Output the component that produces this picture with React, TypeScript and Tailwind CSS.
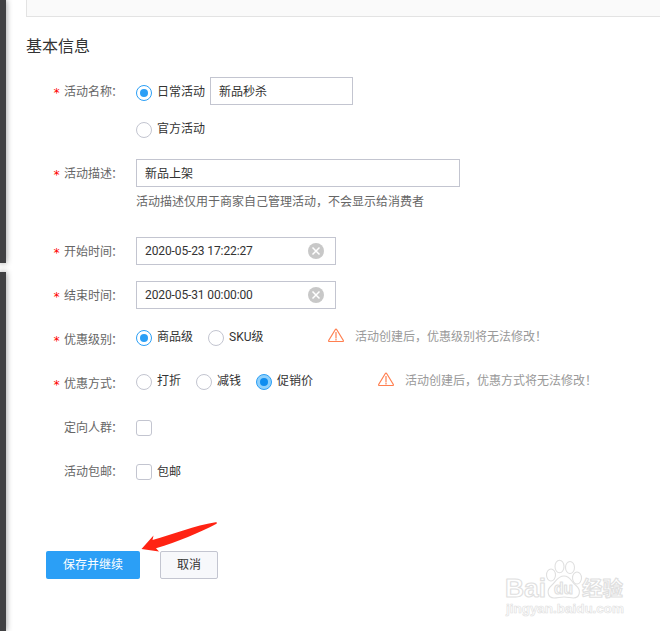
import type { ReactNode } from "react";

function Radio({ state = "off" }: { state?: "off" | "on" | "focus" }) {
  if (state === "off") {
    return <span className="size-4 shrink-0 rounded-full border border-[#c3c5d0] bg-white" />;
  }
  return (
    <span
      className={
        state === "on"
          ? "flex size-4 shrink-0 items-center justify-center rounded-full border border-[#2b9ff6] bg-white"
          : "flex size-4 shrink-0 items-center justify-center rounded-full border border-[#2b9ff6] bg-[#8fd0fb]"
      }
    >
      <span className={state === "on" ? "size-2 rounded-full bg-[#2b9ff6]" : "size-2 rounded-full bg-[#0f8df0]"} />
    </span>
  );
}

function Option({ children, state }: { children: string; state?: "off" | "on" | "focus" }) {
  return (
    <label className="flex h-4 items-start text-[#333]">
      <Radio state={state} />
      <span className="ml-[5px] -mt-px leading-4">{children}</span>
    </label>
  );
}

function Row({ label, required = true, className, children }: { label: string; required?: boolean; className: string; children: ReactNode }) {
  return (
    <div className={`flex items-start ${className}`}>
      <div className="flex w-[110px] shrink-0 pl-[27px] leading-4 text-[#666]">
        <span className="w-[11px] pt-[2px] font-['DejaVu_Sans_Mono'] text-[12px] leading-4 text-[#f00]">{required ? "*" : ""}</span>
        <span className="pt-px">
          {label}
          <span className="-ml-px">：</span>
        </span>
      </div>
      {children}
    </div>
  );
}

function DateField({ value }: { value: string }) {
  return (
    <div className="-mt-[6px] flex h-7 w-[200px] items-center justify-between border border-[#c3c5d0] bg-white pr-[11px] pl-2 text-[#333]">
      <span className="tracking-[-0.11px]">{value}</span>
      <svg className="size-4" viewBox="0 0 16 16">
        <circle cx="8" cy="8" r="8" fill="#c8c8c8" />
        <path d="M4.5 4.5l7 7M11.5 4.5l-7 7" stroke="#fff" strokeWidth="1.5" />
      </svg>
    </div>
  );
}

function Warning({ children }: { children: string }) {
  return (
    <div className="-mt-[2px] flex h-4 items-start leading-4 text-[#999]">
      <svg className="size-4" viewBox="0 0 16 16" fill="none" stroke="#ff7f50" strokeWidth="1.2">
        <path d="M7.2 1.8Q8 .5 8.8 1.8L15.2 12.2Q15.8 13.500 14.500 13.500H1.500Q.2 13.500.8 12.200Z" />
        <path d="M8 4v6.500M8 11v1.500" />
      </svg>
      <span className="ml-[11px] pt-px">{children}</span>
    </div>
  );
}

function Watermark() {
  return (
    <svg
      className="absolute top-[555px] left-[500px] h-[68px] w-[130px]"
      viewBox="0 0 130 68"
      fill="#fff"
      stroke="#e0e0e0"
      strokeWidth="1.1"
      strokeLinejoin="round"
    >
      <g fontWeight="700">
        <text x="5" y="41.5" fontSize="26" fontFamily="'Liberation Sans',sans-serif" textLength="41" lengthAdjust="spacingAndGlyphs">Bai</text>
        <text x="82" y="40.5" fontSize="20" fontFamily="'Noto Sans CJK SC',sans-serif" textLength="41" lengthAdjust="spacingAndGlyphs">经验</text>
        <text x="6" y="57.5" fontSize="12.500" strokeWidth="0.6" fontFamily="'Liberation Sans',sans-serif" textLength="118" lengthAdjust="spacingAndGlyphs">jingyan.baidu.com</text>
      </g>
      <ellipse cx="51" cy="20" rx="4.5" ry="6" />
      <ellipse cx="59.5" cy="11.5" rx="4.5" ry="6.3" />
      <ellipse cx="70" cy="12.5" rx="4.5" ry="6" />
      <ellipse cx="81" cy="23" rx="4.5" ry="6" transform="translate(-4 0)" />
      <path d="M64 21C57 21 56 27 51.500 30.500C46 35 47.500 43 54 43C58 43 60 42 64 42C68 42 70 43 73.500 43C80 43 81.500 35 76 30.500C71 27 71 21 64 21Z" />
      <text x="54" y="38.5" fontSize="16" fontWeight="700" fontFamily="'Liberation Sans',sans-serif" textLength="19" lengthAdjust="spacingAndGlyphs">du</text>
    </svg>
  );
}

export default function App() {
  return (
    <div className="relative flex h-[631px] w-[660px] overflow-hidden bg-white font-[Roboto,'Noto_Sans_CJK_SC',sans-serif] text-[12px] leading-4">
      <aside className="flex w-[6px] shrink-0 flex-col gap-[9px]">
        <div className="h-[263px] shrink-0 bg-[#414143] shadow-[0_0_6px_rgba(0,0,0,0.45)]" />
        <div className="flex-1 bg-[#414143] shadow-[0_0_6px_rgba(0,0,0,0.45)]" />
      </aside>

      <main className="flex flex-1 flex-col pl-5">
        <div className="h-[17px] shrink-0 border-b border-l border-[#e3e3e3] bg-[#fafafa]" />
        <h1 className="mt-5 h-5 text-[16px] leading-5 text-[#333]">基本信息</h1>

        <Row label="活动名称" className="mt-[26px] h-[37px]">
          <div className="mt-[2px] flex w-[74px]">
            <Option state="on">日常活动</Option>
          </div>
          <div className="-mt-[6px] flex h-7 w-[143px] items-center border border-[#c3c5d0] pt-[2px] pl-2 text-[#333]">新品秒杀</div>
        </Row>
        <div className="mt-[2px] flex h-[43px] items-start pl-[110px]">
          <Option>官方活动</Option>
        </div>

        <Row label="活动描述" className="h-[78px]">
          <div className="flex flex-col">
            <div className="-mt-[6px] flex h-7 w-[324px] items-center border border-[#c3c5d0] pt-[2px] pl-2 text-[#333]">新品上架</div>
            <p className="mt-[7px] leading-4 text-[#666]">活动描述仅用于商家自己管理活动，不会显示给消费者</p>
          </div>
        </Row>
        <Row label="开始时间" className="h-[44px]">
          <DateField value="2020-05-23 17:22:27" />
        </Row>
        <Row label="结束时间" className="h-[44px]">
          <DateField value="2020-05-31 00:00:00" />
        </Row>
        <Row label="优惠级别" className="h-[44px]">
          <div className="-mt-px flex">
            <div className="flex w-[72px]"><Option state="on">商品级</Option></div>
            <div className="flex w-[120px]"><Option>SKU级</Option></div>
            <Warning>活动创建后，优惠级别将无法修改！</Warning>
          </div>
        </Row>
        <Row label="优惠方式" className="h-[44px]">
          <div className="-mt-px flex">
            <div className="flex w-[60px]"><Option>打折</Option></div>
            <div className="flex w-[60px]"><Option>减钱</Option></div>
            <div className="flex w-[122px]"><Option state="focus">促销价</Option></div>
            <Warning>活动创建后，优惠方式将无法修改！</Warning>
          </div>
        </Row>
        <Row label="定向人群" required={false} className="h-[44px]">
          <span className="mt-px size-4 rounded-[3px] border border-[#c3c5d0]" />
        </Row>
        <Row label="活动包邮" required={false} className="h-[88px]">
          <span className="mt-px size-4 rounded-[3px] border border-[#c3c5d0]" />
          <span className="ml-[5px] pt-px text-[#333]">包邮</span>
        </Row>

        <div className="flex gap-5 pl-5">
          <button className="h-7 w-[94px] rounded-[2px] bg-[#2b9ff6] text-white">保存并继续</button>
          <button className="h-7 w-[58px] rounded-[2px] border border-[#c3c5d0] bg-[#f7f8fb] text-[#333]">取消</button>
        </div>
      </main>

      <svg className="absolute top-[520px] left-[138px] h-[34px] w-[82px]" viewBox="0 0 82 34" fill="#ff2313">
        <path d="M3.500 29L15.500 15.500L14.500 20C35 14.500 57 5.500 77.500 2.300Q79.800 2.200 78.500 3.700C61 13 40 21.500 18 28.200L21 31.500Z" />
      </svg>
      <Watermark />
    </div>
  );
}
